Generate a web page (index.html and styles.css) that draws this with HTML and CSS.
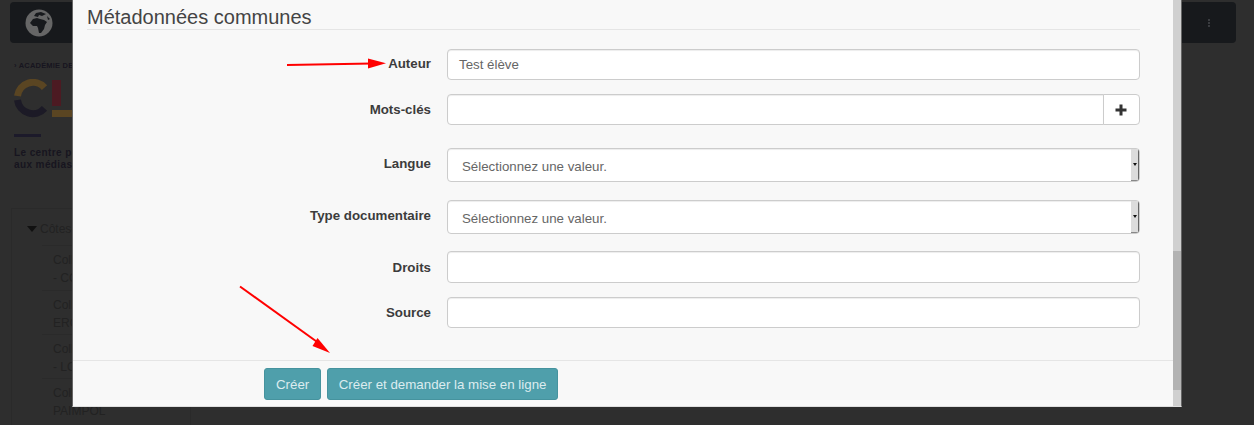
FILE: index.html
```html
<!DOCTYPE html>
<html lang="fr">
<head>
<meta charset="utf-8">
<title>Métadonnées communes</title>
<link rel="stylesheet" href="styles.css">
</head>
<body>
<div class="page">
  <header class="navbar">
    <svg class="globe" viewBox="0 0 28 28" width="28" height="28" aria-hidden="true">
      <circle cx="14" cy="14" r="13.5" fill="#666"/>
      <path d="M11 4 L16 3 L21 5 L17 7 L14 6 L13 8 L9 7 Z M8 10 L12 9 L15 10 L19 11 L22 13 L20 16 L19 20 L16 24 L14 24 L13 19 L12 17 L8 17 L5 14 Z M22 7 L25 10 L23 11 Z" fill="#17191c"/>
    </svg>
    <span class="dots"><i></i><i></i><i></i></span>
  </header>
  <div class="brand">
    <p class="academy">› ACADÉMIE DE RENNES</p>
    <svg class="logo" viewBox="0 0 60 40" width="60" height="40" aria-hidden="true">
      <path d="M3.5 17 A15.5 15.5 0 0 1 30.5 8.6" fill="none" stroke="#5a4522" stroke-width="7"/>
      <path d="M3.5 21 A15.5 15.5 0 0 0 30.5 29.4" fill="none" stroke="#1c1a26" stroke-width="7"/>
      <rect x="38" y="1" width="9" height="26" fill="#4c1a22"/>
      <rect x="38" y="31" width="22" height="7" fill="#5a4522"/>
    </svg>
    <div class="rule"></div>
    <p class="tagline">Le centre pour l'éducation<br>aux médias</p>
  </div>
  <aside class="tree">
    <div class="tree-head"><span class="caret"></span>Côtes-d'Armor</div>
    <ul class="tree-list">
      <li>Collège<br>- COE</li>
      <li>Collège<br>ERG</li>
      <li>Collège<br>- LOU</li>
      <li>Collège<br>PAIMPOL</li>
    </ul>
  </aside>
</div>

<main class="modal">
  <div class="modal-scroll">
    <div class="modal-body">
      <h4 class="section-title">Métadonnées communes</h4>
      <form class="form">
        <div class="row row-a"><label class="label label-up-small">Auteur</label><div class="control">Test élève</div></div>
        <div class="row row-b"><label class="label">Mots-clés</label>
          <div class="group"><div class="control control-grow"></div><button type="button" class="add">
            <svg viewBox="0 0 12 12" width="12" height="12" aria-hidden="true"><path d="M4.5 0.5h3v4h4v3h-4v4h-3v-4h-4v-3h4z" fill="#333"/></svg>
          </button></div>
        </div>
        <div class="row row-c"><label class="label label-up">Langue</label>
          <div class="select"><span class="select-text">Sélectionnez une valeur.</span><span class="spin"><b></b></span></div></div>
        <div class="row row-d"><label class="label label-up">Type documentaire</label>
          <div class="select"><span class="select-text">Sélectionnez une valeur.</span><span class="spin"><b></b></span></div></div>
        <div class="row row-e"><label class="label label-down">Droits</label><div class="control control-tall"></div></div>
        <div class="row"><label class="label">Source</label><div class="control"></div></div>
      </form>
    </div>
    <footer class="modal-footer">
      <button type="button" class="btn">Créer</button>
      <button type="button" class="btn">Créer et demander la mise en ligne</button>
    </footer>
  </div>
  <div class="scrollbar"><div class="thumb"></div></div>
</main>

<svg class="arrows" viewBox="0 0 1254 425" width="1254" height="425" aria-hidden="true">
  <path d="M287 65 L372 63.5" stroke="#f00" stroke-width="2" fill="none"/>
  <path d="M368 58.5 L386 63.2 L368 68.5 Z" fill="#f00"/>
  <path d="M240 286.5 L320 344" stroke="#f00" stroke-width="2" fill="none"/>
  <path d="M317.5 338 L330 353 L312.5 346 Z" fill="#f00"/>
</svg>
</body>
</html>
```
FILE: styles.css
```css
* { box-sizing: border-box; }
html, body { margin: 0; height: 425px; overflow: hidden; }
body {
  position: relative;
  background: #2e2e2e;
  font-family: "Liberation Sans", Arial, sans-serif;
  color: #333;
}
.page { padding: 2px 18px 0 10px; }
.navbar {
  height: 41px;
  background: #17191c;
  border-radius: 4px;
  display: flex;
  align-items: center;
  justify-content: space-between;
  padding: 0 26px 0 15px;
}
.globe { display: block; }
.dots { display: flex; flex-direction: column; gap: 1px; }
.dots i { width: 2px; height: 2px; background: #3a3c40; display: block; }
.brand { padding: 18px 0 0 4px; height: 165px; color: #17151f; }
.academy { margin: 0; font-size: 7.5px; line-height: 9px; font-weight: 700; letter-spacing: .2px; white-space: nowrap; }
.logo { display: block; margin-top: 9px; }
.rule { width: 27px; height: 3px; background: #1c1a2a; margin-top: 15px; }
.tagline { margin: 10px 0 0; font-size: 10px; line-height: 11.5px; font-weight: 700; letter-spacing: .4px; white-space: nowrap; }
.tree {
  width: 180px;
  height: 217px;
  margin-left: 1px;
  border: 1px solid #2a2a2a;
  border-bottom: 0;
  padding: 12px 0 0 14px;
  font-size: 12px;
  color: #222;
}
.tree-head { display: flex; align-items: center; gap: 3px; line-height: 16px; height: 16px; white-space: nowrap; }
.caret { width: 0; height: 0; border: 5px solid transparent; border-top: 6px solid #111; border-bottom: 0; margin: 0 0 0 1px; }
.tree-list { list-style: none; margin: 8px 0 0 16px; padding: 0; }
.tree-list li { padding: 5px 0 2px 11px; line-height: 18px; border-top: 1px solid #2a2a2a; white-space: nowrap; }
.tree-list li:first-child { padding-bottom: 3px; }

.modal {
  position: absolute;
  left: 72px;
  top: 0;
  width: 1110px;
  height: 407px;
  background: #f8f8f8;
  border-left: 1px solid #666;
  border-right: 1px solid #666;
  border-bottom: 1px solid #e0e0e0;
  display: flex;
}
.modal-scroll { flex: 1; display: flex; flex-direction: column; min-width: 0; }
.modal-body { height: 360px; padding: 0 33px 0 14px; }
.section-title {
  margin: 0;
  height: 30px;
  padding-top: 7px;
  font-size: 20px;
  line-height: 20px;
  font-weight: 400;
  color: #444;
  border-bottom: 1px solid #e5e5e5;
}
.form { padding-top: 19px; }
.row { display: grid; grid-template-columns: 344px 1fr; column-gap: 16px; align-items: center; }
.row-a { margin-bottom: 14px; }
.row-b { margin-bottom: 23px; }
.row-c { margin-bottom: 18px; }
.row-d { margin-bottom: 17px; }
.row-e { margin-bottom: 14px; }
.label { text-align: right; font-size: 13.3px; line-height: 16px; font-weight: 700; color: #3c3c3c; }
.label-up { margin-top: -3px; }
.label-up-small { margin-top: -2px; }
.label-down { margin-top: 2px; }
.control {
  height: 31px;
  background: #fff;
  border: 1px solid #ccc;
  border-radius: 4px;
  box-shadow: inset 0 1px 1px rgba(0,0,0,.075);
  padding: 0 11px;
  display: flex;
  align-items: center;
  font-size: 13.3px;
  color: #666;
}
.control-tall { height: 32px; }
.group { display: flex; }
.control-grow { flex: 1; border-radius: 4px 0 0 4px; }
.add {
  width: 37px;
  height: 31px;
  margin: 0 0 0 -1px;
  padding: 0 2px 0 0;
  background: #fff;
  border: 1px solid #ccc;
  border-radius: 0 4px 4px 0;
  display: flex;
  align-items: center;
  justify-content: center;
}
.select {
  height: 34px;
  background: #fff;
  border: 1px solid #ccc;
  border-radius: 4px;
  box-shadow: inset 0 1px 1px rgba(0,0,0,.075);
  padding: 0 0 0 14px;
  display: flex;
  align-items: center;
  justify-content: space-between;
  font-size: 13.3px;
  color: #666;
  overflow: hidden;
}
.select-text { padding-top: 3px; }
.spin {
  align-self: stretch;
  width: 8px;
  background: #dcdcdc;
  border-right: 1px solid #666;
  border-bottom: 1px solid #888;
  display: flex;
  align-items: center;
  justify-content: center;
}
.spin b { width: 0; height: 0; border: 2px solid transparent; border-top: 3px solid #111; border-bottom: 0; }
.modal-footer {
  flex: 1;
  border-top: 1px solid #e5e5e5;
  display: flex;
  align-items: flex-start;
  justify-content: flex-start;
  gap: 5.5px;
  padding: 7px 0 0 191px;
}
.btn {
  height: 32px;
  padding: 0 11px;
  background: #4f9fab;
  border: 1px solid #46939e;
  border-radius: 3px;
  color: #dcecef;
  font-family: inherit;
  font-size: 13.3px;
}
.scrollbar { width: 8px; background: #d0d0d0; padding-top: 251px; }
.thumb { height: 139px; background: #b3b3b3; }
.arrows { position: absolute; left: 0; top: 0; pointer-events: none; }
```
